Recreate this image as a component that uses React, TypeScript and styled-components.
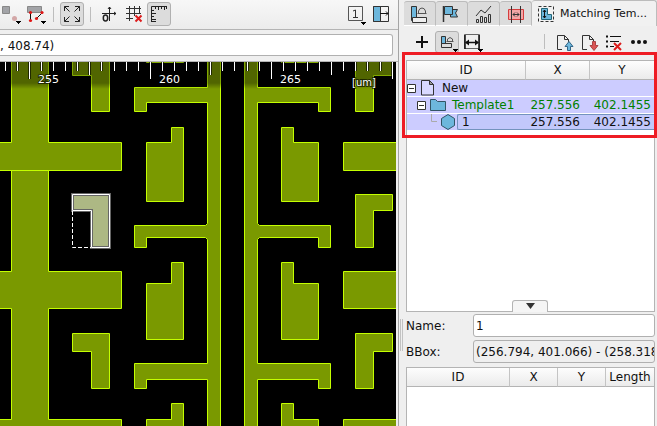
import React from "react";
import styled, { createGlobalStyle } from "styled-components";

const Global = createGlobalStyle`
  * { box-sizing: border-box; }
  html, body { margin: 0; height: 100%; }
  body { background: #efefef; color: #111; font: 12px/16px "DejaVu Sans", sans-serif; overflow: hidden; }
  svg { display: block; flex: none; }
  button { font: inherit; color: inherit; }
`;

const Window = styled.div`
  display: grid;
  grid-template-columns: minmax(0, 1fr) 259px;
  height: 100vh;
  overflow: hidden;
`;

const Main = styled.main`
  display: flex;
  flex-direction: column;
  min-width: 0;
  min-height: 0;
`;

const Toolbar = styled.div`
  display: flex;
  align-items: center;
  gap: 1px;
  height: 30px;
  padding: 2px 6px 3px 0;
  background: linear-gradient(#f7f7f7, #ececec);
  border-bottom: 1px solid #b4b4b4;
`;

const ToolButton = styled.button<{ $pressed?: boolean; $narrow?: boolean }>`
  display: flex;
  justify-content: flex-end;
  align-items: center;
  width: ${(p) => (p.$narrow ? 22 : 24)}px;
  height: 24px;
  padding: 0;
  border: 1px solid ${(p) => (p.$pressed ? "#b0b0b0" : "transparent")};
  border-radius: 3px;
  background: ${(p) => (p.$pressed ? "#dcdcdc" : "transparent")};
`;

const Separator = styled.span`
  width: 1px;
  height: 15px;
  margin: 0 5px;
  background: #bdbdbd;
`;

const Spacer = styled.span`
  flex: 1;
`;

const CoordinateRow = styled.div`
  display: flex;
  height: 32px;
  padding: 4px 5px 5px 0;
  border-bottom: 1px solid #b4b4b4;
`;

const CoordinateInput = styled.input`
  flex: 1;
  min-width: 0;
  padding: 1px 0 0;
  border: 1px solid #b0b0b0;
  border-left: 0;
  border-radius: 0 3px 3px 0;
  background: #fff;
  color: #111;
  font: inherit;
`;

const Canvas = styled.div`
  flex: 1;
  min-height: 0;
  margin-right: 2px;
  background: #000;
  overflow: hidden;

  svg {
    width: 100%;
    height: 100%;
  }
`;

const Side = styled.aside`
  position: relative;
  display: flex;
  flex-direction: column;
  min-width: 0;
  min-height: 0;
  padding: 0 2px 0 7px;
  border-left: 1px solid #a4a4a4;
`;

const Grip = styled.span`
  position: absolute;
  left: 1px;
  top: 319px;
  width: 3px;
  height: 32px;
  border: solid #c2c2c2;
  border-width: 0 1px;
`;

const TabBar = styled.div`
  display: flex;
  height: 26px;
  margin: 0 -2px;
`;

const Tab = styled.button<{ $active?: boolean }>`
  display: flex;
  align-items: center;
  justify-content: ${(p) => (p.$active ? "flex-start" : "center")};
  gap: 6px;
  flex: ${(p) => (p.$active ? "1 1 0" : "0 0 32px")};
  min-width: 0;
  height: ${(p) => (p.$active ? 26 : 25)}px;
  margin-top: ${(p) => (p.$active ? 0 : 1)}px;
  padding: 0 0 0 ${(p) => (p.$active ? 6 : 0)}px;
  border: 1px solid #bcbcbc;
  border-width: 1px 1px ${(p) => (p.$active ? 0 : 1)}px 0;
  border-bottom-color: #fff;
  border-radius: 3px 3px 0 0;
  background: ${(p) => (p.$active ? "#f1f1f1" : "#dcdcdc")};
  font-size: 11px;
  white-space: nowrap;
`;

const ActionBar = styled.div`
  display: flex;
  align-items: center;
  gap: 1px;
  height: 34px;
  padding: 0 5px 3px 4px;

  ${ToolButton} {
    height: 22px;
  }
`;

const CellTable = styled.table`
  width: 100%;
  table-layout: fixed;
  border-spacing: 0;
`;

const HeadCell = styled.th<{ $width?: number }>`
  width: ${(p) => (p.$width ? `${p.$width}px` : "auto")};
  height: 19px;
  padding: 0;
  border-bottom: 1px solid #b4b4b4;
  border-right: 1px solid #c4c4c4;
  background: linear-gradient(#fdfdfd, #ebebeb);
  font-weight: 400;
  text-align: center;

  &:last-child {
    border-right: 0;
  }
`;

const TreeBox = styled.div`
  height: 252px;
  border: 1px solid #b4b4b4;
  background: #fff;
`;

const TreeRow = styled.tr<{ $found?: boolean }>`
  background: #ccccff;
  color: ${(p) => (p.$found ? "#008000" : "#111")};
`;

const TreeCell = styled.td<{ $selected?: boolean }>`
  height: 17px;
  padding: 0;
  border-bottom: 1px solid #fff;
  text-align: right;

  > span {
    display: block;
    height: 16px;
    padding-right: 10px;
    background: ${(p) => (p.$selected ? "#c2c8fb" : "transparent")};
    box-shadow: ${(p) => (p.$selected ? "inset 0 1px #7393bd, inset 0 -1px #7393bd" : "none")};
  }

  &:last-child > span {
    padding-right: 3px;
  }
`;

const TreeLabel = styled.div<{ $indent: number }>`
  display: flex;
  align-items: center;
  height: 16px;
  padding-left: ${(p) => p.$indent}px;
`;

const Fold = styled.button`
  display: flex;
  width: 9px;
  height: 9px;
  margin-right: 4px;
  padding: 0;
  border: 0;
  background: #fff;
`;

const LabelText = styled.span<{ $selected?: boolean }>`
  flex: 1;
  height: 16px;
  margin-left: ${(p) => (p.$selected ? 1 : 6)}px;
  padding-left: ${(p) => (p.$selected ? 4 : 0)}px;
  border: 1px solid transparent;
  border-width: 1px 0 1px ${(p) => (p.$selected ? 1 : 0)}px;
  border-color: ${(p) => (p.$selected ? "#7393bd" : "transparent")};
  border-radius: 2px 0 0 2px;
  background: ${(p) => (p.$selected ? "#c2c8fb" : "transparent")};
  line-height: 14px;
  text-align: left;
`;

const Highlight = styled.div`
  position: absolute;
  inset: 52px 0 auto 3px;
  height: 86px;
  border: 3px solid #ee1c24;
  pointer-events: none;
`;

const Collapse = styled.button`
  position: absolute;
  left: 113px;
  top: 300px;
  display: flex;
  align-items: center;
  justify-content: center;
  width: 36px;
  height: 12px;
  padding: 0;
  border: 1px solid #b4b4b4;
  border-bottom: 0;
  border-radius: 3px 3px 0 0;
  background: #f5f5f5;
`;

const Form = styled.div`
  display: grid;
  grid-template-columns: 67px minmax(0, 1fr);
  row-gap: 3px;
  align-items: center;
  padding: 2px 0 4px;
`;

const TextField = styled.input`
  width: 100%;
  height: 23px;
  padding: 0 0 0 2px;
  border: 1px solid #b0b0b0;
  border-radius: 3px;
  background: ${(p) => (p.readOnly ? "#efefef" : "#fff")};
  color: #111;
  font: inherit;
`;

const ListBox = styled.div`
  flex: 1;
  min-height: 0;
  border: 1px solid #b4b4b4;
  border-bottom: 0;
  background: #fff;
`;

const BLUE = "#6db7dc";

type IconProps = { children: React.ReactNode; w?: number; h?: number };

const Icon = ({ children, w = 22, h = 22 }: IconProps) => (
  <svg width={w} height={h} viewBox={`0 0 ${w} ${h}`} fill="none" stroke="#333" aria-hidden="true">
    {children}
  </svg>
);

const Caret = ({ x, y }: { x: number; y: number }) => (
  <path d={`M${x} ${y}h5v1h-1v1h-1v1h-1v-1h-1v-1h-1z`} fill="#000" stroke="none" />
);

const Shapes = () => (
  <>
    <path d="M2.500 3.500v14h5v-14z" fill={BLUE} />
    <path d="M3.500 14.500h14v5h-14z" fill="#efefef" />
    <path d="M8.500 10.500h9M9.500 10v-2q1-3 3.500-3t3.500 3v2" stroke="#555" />
  </>
);

const PageArrow = ({ up }: { up?: boolean }) => (
  <Icon>
    <path d="M10 18.500H5.500V4.500h7l4 4v3M12.500 4.500v4h4" />
    {up ? (
      <path d="M15.500 19.500v-4h-2.500l4-5 4 5h-2.500v4z" fill={BLUE} stroke="#368" />
    ) : (
      <path d="M15.500 10.500v4h-2.500l4 5 4-5h-2.500v-4z" fill="#dc5454" stroke="#a44" />
    )}
  </Icon>
);

const LAYOUT = [
  "M-1 142.500H11.500V50H48.500V142.500H121.500V170.500H-1Z",
  "M-1 271.500H11.500V170.500H48.500V271.500H121.500V308.500H48.500V419.500H121.500V430H-1V419.500H11.500V308.500H-1Z",
  "M72.500 50V75.500H91.500V111.500H109.500V50Z",
  "M72.500 333.500H109.500V388.500H91.500V351.500H72.500Z",
  "M207.500 50V87.500H134.500V111.500H146.500V102.500H207.500V223.500L205.500 225.500H134.500V247.500H146.500V237.500H205.500L207.500 239.500V363.500H134.500V388.500H146.500V379.500H207.500V430H220.500V50Z",
  "M257.500 50V87.500H330.500V111.500H318.500V102.500H257.500V223.500L259.500 225.500H330.500V247.500H318.500V237.500H259.500L257.500 239.500V363.500H330.500V388.500H318.500V379.500H257.500V430H244.500V50Z",
  "M146.500 50H183.500V62.500H146.500Z",
  "M281.500 50H318.500V62.500H281.500Z",
  "M171.500 127.500H183.500V201.500H146.500V142.500H171.500Z",
  "M171.500 262.500H183.500V339.500H146.500V283.500H171.500Z",
  "M171.500 403.500H183.500V430H146.500V419.500H171.500Z",
  "M281.500 127.500H293.500V142.500H318.500V201.500H281.500Z",
  "M281.500 262.500H293.500V283.500H318.500V339.500H281.500Z",
  "M281.500 403.500H293.500V419.500H318.500V430H281.500Z",
  "M343.500 142.500H800V170.500H343.500Z",
  "M343.500 271.500H800V308.500H343.500Z",
  "M343.500 419.500H800V450H343.500Z",
  "M355.500 50H392.500V75.500H373.500V111.500H355.500Z",
  "M355.500 194.500H392.500V210.500H373.500V247.500H355.500Z",
  "M355.500 333.500H392.500V351.500H373.500V388.500H355.500Z",
];

const TICKS = [5, 17, 29, 41, 53, 65, 77, 89, 101, 114, 126, 138, 150, 162, 174, 186, 198, 210, 222, 234, 247, 259, 271, 283, 295, 307, 319, 331, 343, 355, 367, 380, 392];

const tickEnd = (i: number) => (i % 10 === 2 ? 79 : i % 5 === 2 ? 75 : 71);

const LayoutView = () => (
  <svg viewBox="0 62 396 364" preserveAspectRatio="xMinYMin slice" role="img" aria-label="Layout">
    <defs>
      <linearGradient id="shade" x1="0" y1="0" x2="0" y2="1">
        <stop offset="0.78" stopOpacity="0.34" />
        <stop offset="1" stopOpacity="0" />
      </linearGradient>
    </defs>
    <g fill="#7a9900" stroke="#c4ff00">
      {LAYOUT.map((d) => (
        <path key={d} d={d} />
      ))}
    </g>
    <path d="M72.500 194.500H109.500V247.500H91.500V210.500H72.500Z" fill="#adb884" stroke="#666" strokeWidth="3" />
    <path d="M72.500 194.500H109.500V247.500H91.500V210.500H72.500Z" stroke="#fff" fill="none" />
    <path d="M72.500 211V247.500H91" stroke="#fff" strokeDasharray="4 2" fill="none" />
    <rect x="0" y="62" width="800" height="27" fill="url(#shade)" />
    {TICKS.map((x, i) => (
      <g key={x}>
        <path d={`M${x + 0.5} 62V${tickEnd(i)}`} stroke="#000" strokeOpacity="0.6" strokeWidth="3" />
        <path d={`M${x + 0.5} 62V${tickEnd(i)}`} stroke="#fff" />
      </g>
    ))}
    <g fill="#fff" stroke="#000" strokeOpacity="0.6" strokeWidth="2" paintOrder="stroke" fontSize="11">
      <text x="38" y="83">255</text>
      <text x="159" y="83">260</text>
      <text x="280" y="83">265</text>
      <text x="352" y="86" fontSize="10">[um]</text>
    </g>
  </svg>
);

const FoldBox = () => (
  <Icon w={9} h={9}>
    <path d="M.500.500h8v8h-8zM2 4.500h5" />
  </Icon>
);

export default function App() {
  return (
    <>
      <Global />
      <Window>
        <Main>
          <Toolbar>
            <ToolButton $narrow aria-label="Shapes">
              <Icon>
                <path d="M3.500 3.500h7v7h-7z" fill="#a2a3a7" stroke="#888" />
                <circle cx="15.500" cy="15.500" r="2.500" fill="#d3a7a7" stroke="none" />
                <Caret x={17} y={18} />
              </Icon>
            </ToolButton>
            <ToolButton aria-label="Vertices">
              <Icon>
                <path d="M3.500 3.500h14v6h-14z" fill="#a2a3a7" stroke="#888" />
                <path d="M6.500 10v8M18 10l-6 6" stroke="#111" />
                <g fill="#e01515" stroke="none">
                  <circle cx="6.500" cy="9.500" r="1.600" />
                  <circle cx="18" cy="9.500" r="1.600" />
                  <circle cx="6.500" cy="17.500" r="1.600" />
                  <circle cx="12.500" cy="15.500" r="1.600" />
                </g>
                <Caret x={17} y={18} />
              </Icon>
            </ToolButton>
            <Separator />
            <ToolButton $pressed aria-label="Fit view">
              <Icon>
                <path d="M3.500 8V3.500H8M3.500 3.500l5 5M14 3.500h4.500V8M18.500 3.500l-5 5M3.500 14v4.500H8M3.500 18.500l5-5M18.500 14v4.500H14M18.500 18.500l-5-5" stroke="#222" />
              </Icon>
            </ToolButton>
            <Separator />
            <ToolButton aria-label="Origin">
              <Icon>
                <path d="M4 10.500h14M11.500 4v14M10 6l1.500-2 1.500 2M16 9l2 1.500-2 1.500" stroke="#222" />
                <ellipse cx="7.500" cy="15" rx="2.200" ry="3" stroke="#222" strokeWidth="1.500" />
              </Icon>
            </ToolButton>
            <ToolButton aria-label="Hide grid">
              <Icon>
                <path d="M3 5.500h15M3 10.500h15M3 15.500h7M6.500 3v15M11.500 3v10M16.500 3v8" />
                <path d="M12.500 12.500l6 6M18.500 12.500l-6 6" stroke="#dd1c1c" strokeWidth="2" />
              </Icon>
            </ToolButton>
            <ToolButton $pressed aria-label="Ruler">
              <Icon>
                <path d="M3.500 19V3.500H19M3 7.500h3M3 10.500h5M3 13.500h3M3 16.500h5M7.500 3v3M10.500 3v4M13.500 3v3M16.500 3v4M18.500 3v3M3 18.500h5" stroke="#222" />
              </Icon>
            </ToolButton>
            <Spacer />
            <ToolButton aria-label="Level">
              <Icon>
                <path d="M4.500 3.500h14v14h-14z" stroke="#555" />
                <path d="M9 8l2.500-1v7.500M9 14.500h5" stroke="#333" />
                <Caret x={17} y={19} />
              </Icon>
            </ToolButton>
            <ToolButton aria-label="Toggle side panel">
              <Icon>
                <path d="M4.500 3.500h15v15h-15z" />
                <path d="M4.500 3.500h7v15h-7z" fill={BLUE} />
                <path d="M11 10.500h8M17 8.500l2 2-2 2" stroke="#111" />
              </Icon>
            </ToolButton>
          </Toolbar>
          <CoordinateRow>
            <CoordinateInput aria-label="Coordinates" defaultValue=", 408.74)" />
          </CoordinateRow>
          <Canvas>
            <LayoutView />
          </Canvas>
        </Main>

        <Side>
          <TabBar role="tablist">
            <Tab role="tab" aria-label="Objects">
              <Icon>
                <Shapes />
              </Icon>
            </Tab>
            <Tab role="tab" aria-label="Flags">
              <Icon>
                <path d="M2.500 3v16" strokeWidth="1.500" />
                <path d="M10.500 6.500h6l-2 3.500 2 4h-7v-3h1z" fill={BLUE} />
                <path d="M3.500 3.500h8v8h-8z" fill={BLUE} />
              </Icon>
            </Tab>
            <Tab role="tab" aria-label="Statistics">
              <Icon>
                <path d="M3.500 19.500v-3h2v3zM7.500 19.500v-6h2v6zM11.500 19.500v-5h2v5zM15.500 19.500v-8h2v8z" />
                <path d="M3 13l5-6 4 3 6-7" />
              </Icon>
            </Tab>
            <Tab role="tab" aria-label="Measure">
              <Icon>
                <path d="M3.500 6.500h15v10h-15z" fill="#f4a6a6" stroke="#d53c3c" />
                <path d="M6.500 3v17M15.500 3v17M8 11.500h6M10 9.500l-2 2 2 2M12 9.500l2 2-2 2" />
              </Icon>
            </Tab>
            <Tab role="tab" $active aria-selected="true">
              <Icon w={16} h={18}>
                <path d="M.500 1.500h15v15H.500z" strokeDasharray="3 2" />
                <path d="M3.500 3.500h6v6h4v5h-10z" fill={BLUE} stroke="#267" />
                <path d="M6.500 5v8M5 7l1.500-2L8 7M5 11l1.500 2L8 11" stroke="#111" />
              </Icon>
              Matching Tem...
            </Tab>
          </TabBar>
          <ActionBar>
            <ToolButton aria-label="Add">
              <Icon h={20}>
                <path d="M11 4v12M5 10h12" stroke="#111" strokeWidth="2" />
              </Icon>
            </ToolButton>
            <ToolButton $pressed aria-label="Template shapes">
              <Icon h={20}>
                <path d="M5.500 4.500h4v10h-4z" fill={BLUE} />
                <path d="M5.500 11.500h10v4h-10z" fill="#dcdcdc" />
                <path d="M10.500 9.500h7M11.500 9V7q2.500-3 5 0v2" stroke="#555" />
                <Caret x={17} y={17} />
              </Icon>
            </ToolButton>
            <ToolButton aria-label="Distance">
              <Icon h={20}>
                <path d="M3.500 2.500h15v14h-15z" stroke="#666" />
                <path d="M4 3v14M18 3v14M5 10.500h12" stroke="#111" strokeWidth="1.500" />
                <path d="M8 7.500v6l-4-3zM14 7.500v6l4-3z" fill="#111" stroke="none" />
                <Caret x={17} y={17} />
              </Icon>
            </ToolButton>
            <Spacer />
            <Separator />
            <ToolButton aria-label="Export">
              <PageArrow up />
            </ToolButton>
            <ToolButton aria-label="Import">
              <PageArrow />
            </ToolButton>
            <ToolButton aria-label="Clear list">
              <Icon>
                <path d="M4 5.500h2M4 10.500h2M4 15.500h2" stroke="#111" strokeWidth="2" />
                <path d="M8 5.500h11M8 10.500h9M8 15.500h4" stroke="#111" />
                <path d="M12 12l7 7M19 12l-7 7" stroke="#dd1c1c" strokeWidth="2" />
              </Icon>
            </ToolButton>
            <ToolButton aria-label="More">
              <Icon>
                <g fill="#111" stroke="none">
                  <circle cx="6" cy="11" r="2" />
                  <circle cx="12" cy="11" r="2" />
                  <circle cx="18" cy="11" r="2" />
                </g>
              </Icon>
            </ToolButton>
          </ActionBar>

          <TreeBox>
            <CellTable>
              <thead>
                <tr>
                  <HeadCell>ID</HeadCell>
                  <HeadCell $width={64}>X</HeadCell>
                  <HeadCell $width={64}>Y</HeadCell>
                </tr>
              </thead>
              <tbody>
                <TreeRow>
                  <TreeCell>
                    <TreeLabel $indent={0}>
                      <Fold aria-label="Collapse New">
                        <FoldBox />
                      </Fold>
                      <Icon w={16} h={16}>
                        <path d="M1.500.500h8l4 4v10.500h-12z" fill="#d9d9ff" />
                        <path d="M9.500.500v4h4z" fill="#999" />
                      </Icon>
                      <LabelText>New</LabelText>
                    </TreeLabel>
                  </TreeCell>
                  <TreeCell />
                  <TreeCell />
                </TreeRow>
                <TreeRow $found>
                  <TreeCell>
                    <TreeLabel $indent={10}>
                      <Fold aria-label="Collapse Template1">
                        <FoldBox />
                      </Fold>
                      <Icon w={16} h={16}>
                        <path d="M.500 2.500h5l2 2h8v9H.500z" fill={BLUE} stroke="#335566" />
                      </Icon>
                      <LabelText>Template1</LabelText>
                    </TreeLabel>
                  </TreeCell>
                  <TreeCell>
                    <span>257.556</span>
                  </TreeCell>
                  <TreeCell>
                    <span>402.1455</span>
                  </TreeCell>
                </TreeRow>
                <TreeRow>
                  <TreeCell>
                    <TreeLabel $indent={23}>
                      <Icon w={10} h={16}>
                        <path d="M1.500 0v7.500H7" stroke="#aaa" />
                      </Icon>
                      <Icon w={16} h={16}>
                        <path d="M8 .500l6.500 4v7L8 15.500l-6.500-4v-7z" fill={BLUE} stroke="#335566" />
                      </Icon>
                      <LabelText $selected>1</LabelText>
                    </TreeLabel>
                  </TreeCell>
                  <TreeCell $selected>
                    <span>257.556</span>
                  </TreeCell>
                  <TreeCell $selected>
                    <span>402.1455</span>
                  </TreeCell>
                </TreeRow>
              </tbody>
            </CellTable>
          </TreeBox>

          <Form>
            <label htmlFor="name">Name:</label>
            <TextField id="name" defaultValue="1" />
            <label htmlFor="bbox">BBox:</label>
            <TextField id="bbox" readOnly value="(256.794, 401.066) - (258.318, 403.225)" />
          </Form>

          <ListBox>
            <CellTable>
              <thead>
                <tr>
                  <HeadCell>ID</HeadCell>
                  <HeadCell $width={48}>X</HeadCell>
                  <HeadCell $width={48}>Y</HeadCell>
                  <HeadCell $width={48}>Length</HeadCell>
                </tr>
              </thead>
            </CellTable>
          </ListBox>

          <Grip />
          <Collapse aria-label="Collapse details">
            <Icon w={11} h={7}>
              <path d="M1 0h9L5.500 6z" fill="#333" stroke="none" />
            </Icon>
          </Collapse>
          <Highlight />
        </Side>
      </Window>
    </>
  );
}
